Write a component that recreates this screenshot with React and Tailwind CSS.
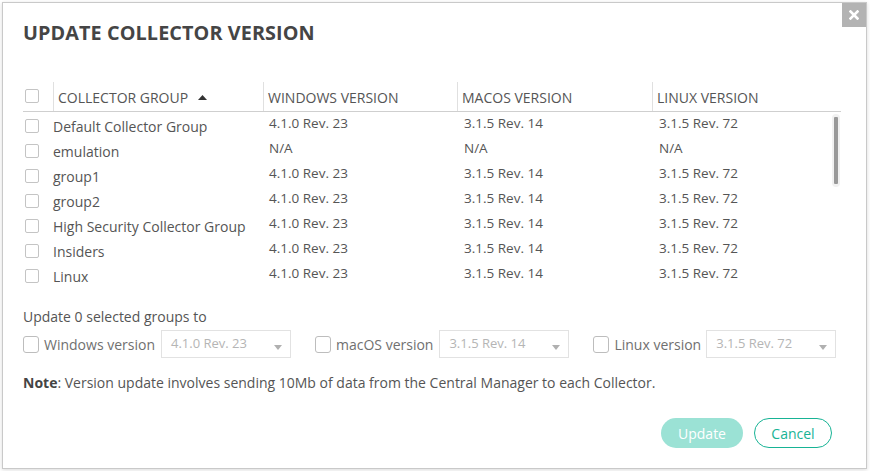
import React from 'react';

const rows = [
  { name: 'Default Collector Group', win: '4.1.0 Rev. 23', mac: '3.1.5 Rev. 14', linux: '3.1.5 Rev. 72' },
  { name: 'emulation', win: 'N/A', mac: 'N/A', linux: 'N/A' },
  { name: 'group1', win: '4.1.0 Rev. 23', mac: '3.1.5 Rev. 14', linux: '3.1.5 Rev. 72' },
  { name: 'group2', win: '4.1.0 Rev. 23', mac: '3.1.5 Rev. 14', linux: '3.1.5 Rev. 72' },
  { name: 'High Security Collector Group', win: '4.1.0 Rev. 23', mac: '3.1.5 Rev. 14', linux: '3.1.5 Rev. 72' },
  { name: 'Insiders', win: '4.1.0 Rev. 23', mac: '3.1.5 Rev. 14', linux: '3.1.5 Rev. 72' },
  { name: 'Linux', win: '4.1.0 Rev. 23', mac: '3.1.5 Rev. 14', linux: '3.1.5 Rev. 72' },
];

function Box({ size = 'small' }) {
  const cls = size === 'small'
    ? 'w-[14px] h-[14px] border border-[#c4c4c4] rounded-[2px] bg-white'
    : 'w-[16px] h-[17px] border border-[#bdbdbd] rounded-[3px] bg-white';
  return <span className={'block shrink-0 ' + cls}></span>;
}

function VersionSelect({ value, width }) {
  return (
    <div className={'flex items-center justify-between h-[28px] border border-[#e2e2e2] bg-white pl-[9px] pr-[8px] text-[13px] text-[#b5b5b5] ' + width}>
      <span>{value}</span>
      <svg width="8" height="5" viewBox="0 0 8 5" className="mt-[6px]">
        <path d="M0 0 L8 0 L4 5 Z" fill="#b0b0b0" />
      </svg>
    </div>
  );
}

export default function App() {
  return (
    <div className="w-[870px] h-[471px] bg-white pt-[2px] pl-[2px] overflow-hidden" style={{ fontFamily: '"Open Sans", "Liberation Sans", sans-serif' }}>
      <div className="relative w-[865px] h-[467px] bg-white border border-[#c9c9c9] shadow-[0_1px_4px_rgba(0,0,0,0.15)] pl-[20px] pr-[24px]">
        <button className="absolute top-0 right-0 w-[24px] h-[24px] bg-[#b3b3b3] flex items-center justify-center">
          <svg width="10" height="10" viewBox="0 0 10 10">
            <path d="M1.5 1.5 L8.5 8.5 M8.5 1.5 L1.5 8.5" stroke="#fff" strokeWidth="2.6" strokeLinecap="square" />
          </svg>
        </button>

        <h2 className="pt-[15px] text-[19.8px] font-bold text-[#454545] tracking-[0.1px] leading-[30px]">
          UPDATE COLLECTOR VERSION
        </h2>

        <div className="mt-[35px] w-[818px]">
          <div className="flex items-end h-[29px] border-b border-[#cfcfcf] text-[14px] text-[#555]">
            <div className="w-[30px] h-[29px] flex items-end pb-[8px] pl-[2px]"><Box /></div>
            <div className="w-[210px] h-[29px] border-l border-[#e0e0e0] flex items-end pb-[3px] pl-[4px] gap-[10px]">
              COLLECTOR GROUP
              <svg width="9" height="5" viewBox="0 0 9 5" className="mb-[8px]">
                <path d="M0 5 L9 5 L4.5 0 Z" fill="#333" />
              </svg>
            </div>
            <div className="w-[194px] h-[29px] border-l border-[#e0e0e0] flex items-end pb-[3px] pl-[4px]">WINDOWS VERSION</div>
            <div className="w-[195px] h-[29px] border-l border-[#e0e0e0] flex items-end pb-[3px] pl-[4px]">MACOS VERSION</div>
            <div className="w-[189px] h-[29px] border-l border-[#e0e0e0] flex items-end pb-[3px] pl-[4px]">LINUX VERSION</div>
          </div>

          <div className="relative h-[176px] pt-[1px]">
            {rows.map((r) => (
              <div key={r.name} className="flex items-start h-[25px] text-[13.5px] text-[#555]">
                <div className="w-[30px] pt-[6px] pl-[2px]"><Box /></div>
                <div className="w-[216px] pt-[3px] text-[14px]">{r.name}</div>
                <div className="w-[195px] text-[13.5px]">{r.win}</div>
                <div className="w-[195px] text-[13.5px]">{r.mac}</div>
                <div className="text-[13.5px]">{r.linux}</div>
              </div>
            ))}
            <div className="absolute right-[1px] top-[2px] w-[8px] h-[73px] rounded-full bg-[#f1f1f1] flex justify-center py-[3px]">
              <div className="w-[4px] h-full bg-[#999] rounded-[1px]"></div>
            </div>
          </div>
        </div>

        <p className="mt-[19px] text-[14px] text-[#555] leading-[20px]">Update 0 selected groups to</p>

        <div className="mt-[3px] flex items-center text-[14px] text-[#707070]">
          <Box size="large" />
          <span className="ml-[5px] mr-[6px]">Windows version</span>
          <VersionSelect value="4.1.0 Rev. 23" width="w-[130px]" />
          <span className="ml-[24px]"><Box size="large" /></span>
          <span className="ml-[5px] mr-[6px]">macOS version</span>
          <VersionSelect value="3.1.5 Rev. 14" width="w-[130px]" />
          <span className="ml-[24px]"><Box size="large" /></span>
          <span className="ml-[5px] mr-[5px]">Linux version</span>
          <VersionSelect value="3.1.5 Rev. 72" width="w-[130px]" />
        </div>

        <p className="mt-[15px] text-[14px] text-[#555] leading-[20px]">
          <span className="font-bold text-[#444]">Note</span>: Version update involves sending 10Mb of data from the Central Manager to each Collector.
        </p>

        <div className="mt-[25px] flex justify-end gap-[11px] pr-[10px]">
          <button className="w-[82px] h-[30px] rounded-full bg-[#9be2d5] text-white text-[14px]">Update</button>
          <button className="w-[78px] h-[30px] rounded-full border border-[#17b395] text-[#17b395] text-[14px] bg-white">Cancel</button>
        </div>
      </div>
    </div>
  );
}
